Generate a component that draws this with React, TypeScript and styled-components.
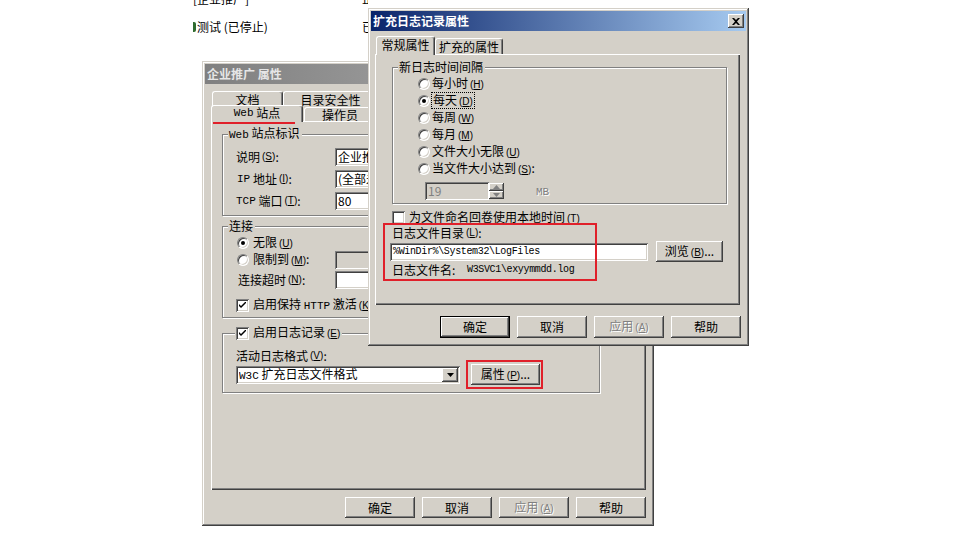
import React from "react";
import styled, { createGlobalStyle } from "styled-components";

const GlobalStyle = createGlobalStyle`
  html, body { margin: 0; padding: 0; background: #fff; }
  body { font-family: "Noto Sans CJK SC", "Liberation Sans", sans-serif; font-size: 12px; color: #000; }
  * { box-sizing: border-box; }
`;

const Desk = styled.div`
  position: relative;
  width: 954px;
  height: 551px;
  overflow: hidden;
  background: #fff;
`;

const Backdrop = styled.div`
  display: grid;
  grid-template-columns: 169px 6px;
  row-gap: 14px;
  padding-left: 193px;
  margin-top: -8px;
  font-size: 12px;
  line-height: 14px;
  white-space: nowrap;
`;

const ListCell = styled.div`
  display: flex;
  align-items: center;
  gap: 1px;
  overflow: hidden;
`;

const Sliver = styled.span`
  width: 3px;
  height: 10px;
  flex: none;
  background: #2f6b2f;
  border-radius: 0 2px 2px 0;
`;

const Window = styled.div<{ $x: number; $y: number; $w: number; $h: number; $z: number }>`
  position: absolute;
  left: ${(p) => p.$x}px;
  top: ${(p) => p.$y}px;
  width: ${(p) => p.$w}px;
  height: ${(p) => p.$h}px;
  z-index: ${(p) => p.$z};
  padding: 3px;
  background: #d4d0c8;
  box-shadow: inset -1px -1px #404040, inset 1px 1px #d4d0c8, inset -2px -2px #808080, inset 2px 2px #fff;
  display: flex;
  flex-direction: column;
`;

const TitleBar = styled.div<{ $active?: boolean }>`
  height: 20px;
  flex: none;
  display: flex;
  align-items: center;
  justify-content: space-between;
  padding: 0 2px 0 2px;
  background: ${(p) =>
    p.$active ? "linear-gradient(90deg, #0a246a, #a6caf0)" : "linear-gradient(90deg, #808080, #b8b8b8)"};
  color: ${(p) => (p.$active ? "#fff" : "#e6e6e6")};
  font-weight: 700;
  font-size: 12px;
  line-height: 14px;
  white-space: nowrap;
`;

const CloseBtn = styled.div`
  width: 16px;
  height: 14px;
  background: #d4d0c8;
  box-shadow: inset -1px -1px #404040, inset 1px 1px #fff, inset -2px -2px #808080;
  display: flex;
  align-items: center;
  justify-content: center;
`;

const Body = styled.div<{ $pt: number; $pl: number; $pr: number }>`
  padding: ${(p) => p.$pt}px ${(p) => p.$pr}px 0 ${(p) => p.$pl}px;
  display: flex;
  flex-direction: column;
`;

const TabStack = styled.div`
  display: flex;
  flex-direction: column;
`;

const TabRow = styled.div<{ $h: number; $pl?: number; $gap?: number }>`
  display: flex;
  align-items: flex-end;
  height: ${(p) => p.$h}px;
  padding-left: ${(p) => p.$pl ?? 0}px;
  gap: ${(p) => p.$gap ?? 0}px;
`;

const Tab = styled.div<{ $sel?: boolean; $w?: number; $h: number }>`
  position: relative;
  z-index: ${(p) => (p.$sel ? 2 : 1)};
  flex: ${(p) => (p.$w ? `0 0 ${p.$w}px` : "1 1 0")};
  height: ${(p) => (p.$sel ? p.$h + 3 : p.$h)}px;
  margin-bottom: ${(p) => (p.$sel ? -1 : 0)}px;
  background: #d4d0c8;
  border-top: 1px solid #fff;
  border-left: 1px solid #fff;
  border-right: 1px solid #404040;
  border-radius: 3px 3px 0 0;
  box-shadow: inset -1px 0 #808080;
  display: flex;
  align-items: center;
  justify-content: center;
  white-space: nowrap;
  overflow: hidden;
  font-size: 12px;
  line-height: 12px;
  padding-bottom: ${(p) => (p.$sel ? 2 : 0)}px;
`;

const Panel = styled.div<{ $w: number; $h: number; $pt: number; $pl: number }>`
  width: ${(p) => p.$w}px;
  height: ${(p) => p.$h}px;
  flex: none;
  padding: ${(p) => p.$pt}px 0 0 ${(p) => p.$pl}px;
  background: #d4d0c8;
  box-shadow: inset 1px 1px #fff, inset -1px -1px #404040, inset -2px -2px #808080;
  display: flex;
  flex-direction: column;
  align-items: flex-start;
`;

const Group = styled.fieldset<{ $w: number; $h: number; $mt?: number }>`
  margin: ${(p) => p.$mt ?? 0}px 0 0 0;
  padding: 0;
  width: ${(p) => p.$w}px;
  height: ${(p) => p.$h}px;
  flex: none;
  min-width: 0;
  border: 1px solid #808080;
  box-shadow: inset 1px 1px #fff, 1px 1px #fff;
`;

const Legend = styled.legend<{ $ml: number; $h?: number }>`
  margin-left: ${(p) => p.$ml}px;
  padding: 0 2px 0 1px;
  height: ${(p) => p.$h ?? 12}px;
  line-height: ${(p) => p.$h ?? 12}px;
  font-size: 12px;
  background: #d4d0c8;
  display: flex;
  align-items: center;
  gap: 4px;
  white-space: nowrap;
`;

const Stack = styled.div<{ $pt: number; $pl: number }>`
  display: flex;
  flex-direction: column;
  padding: ${(p) => p.$pt}px 0 0 ${(p) => p.$pl}px;
`;

const Row = styled.div<{ $h: number; $mt?: number; $ml?: number; $pl?: number; $gap?: number }>`
  display: flex;
  align-items: center;
  height: ${(p) => p.$h}px;
  margin-top: ${(p) => p.$mt ?? 0}px;
  margin-left: ${(p) => p.$ml ?? 0}px;
  padding-left: ${(p) => p.$pl ?? 0}px;
  gap: ${(p) => p.$gap ?? 0}px;
  white-space: nowrap;
  line-height: 14px;
  flex: none;
`;

const Label = styled.span<{ $w?: number; $pl?: number; $gap?: number }>`
  display: flex;
  align-items: center;
  gap: ${(p) => p.$gap ?? 0}px;
  width: ${(p) => (p.$w ? `${p.$w}px` : "auto")};
  padding-left: ${(p) => p.$pl ?? 0}px;
  flex: none;
`;

const Focus = styled.span`
  outline: 1px dotted #000;
  outline-offset: 0;
  padding: 0 1px;
  line-height: 13px;
`;

const AccWrap = styled.span`
  font-family: "Liberation Sans", sans-serif;
  font-size: 10px;
  margin-left: 2px;
`;

const Acc = ({ k }: { k: string }) => (
  <AccWrap>
    (<u>{k}</u>)
  </AccWrap>
);

const Lat = styled.span`
  font-family: "Liberation Mono", monospace;
  font-size: 11px;
`;

const Path = styled.span`
  font-family: "Liberation Mono", monospace;
  font-size: 10px;
  letter-spacing: -0.35px;
`;

const Field = styled.div<{ $w: number; $off?: boolean }>`
  width: ${(p) => p.$w}px;
  height: 18px;
  flex: none;
  background: ${(p) => (p.$off ? "#d4d0c8" : "#fff")};
  color: ${(p) => (p.$off ? "#808080" : "#000")};
  box-shadow: inset 1px 1px #808080, inset -1px -1px #fff, inset 2px 2px #404040, inset -2px -2px #d4d0c8;
  padding: 0 3px;
  display: flex;
  align-items: center;
  overflow: hidden;
  white-space: nowrap;
  line-height: 14px;
`;

const Spin = styled.div`
  display: flex;
  align-items: stretch;
  height: 18px;
`;

const SpinBtns = styled.div`
  width: 15px;
  display: flex;
  flex-direction: column;
  padding: 1px 0;
`;

const SpinBtn = styled.div`
  flex: 1;
  background: #d4d0c8;
  box-shadow: inset -1px -1px #404040, inset 1px 1px #fff, inset -2px -2px #808080;
  display: flex;
  align-items: center;
  justify-content: center;
`;

const Greyed = styled.span`
  color: #808080;
  text-shadow: 1px 1px #fff;
`;

const Select = styled.div<{ $w: number }>`
  width: ${(p) => p.$w}px;
  height: 18px;
  flex: none;
  background: #fff;
  box-shadow: inset 1px 1px #808080, inset -1px -1px #fff, inset 2px 2px #404040, inset -2px -2px #d4d0c8;
  padding: 2px 2px 2px 3px;
  display: flex;
  align-items: center;
  white-space: nowrap;
`;

const SelectText = styled.span`
  flex: 1;
  overflow: hidden;
  line-height: 14px;
`;

const DropBtn = styled.div`
  width: 16px;
  height: 14px;
  background: #d4d0c8;
  box-shadow: inset -1px -1px #404040, inset 1px 1px #fff, inset -2px -2px #808080;
  display: flex;
  align-items: center;
  justify-content: center;
`;

const RadioCircle = styled.span<{ $on?: boolean }>`
  width: 12px;
  height: 12px;
  flex: none;
  border-radius: 50%;
  background: #fff;
  border: 1px solid;
  border-color: #808080 #fff #fff #808080;
  box-shadow: inset 1px 1px #404040, inset -1px -1px #d4d0c8;
  display: flex;
  align-items: center;
  justify-content: center;
  &::after {
    content: "";
    width: 4px;
    height: 4px;
    border-radius: 50%;
    background: ${(p) => (p.$on ? "#000" : "transparent")};
  }
`;

const CheckBox = styled.span`
  width: 13px;
  height: 13px;
  flex: none;
  background: #fff;
  box-shadow: inset 1px 1px #808080, inset -1px -1px #fff, inset 2px 2px #404040, inset -2px -2px #d4d0c8;
  display: flex;
  align-items: center;
  justify-content: center;
`;

const Check = ({ on }: { on?: boolean }) => (
  <CheckBox>
    {on && (
      <svg width="7" height="7" viewBox="0 0 7 7">
        <path d="M0 2 L0 4 L2 6 L7 1 L7 -1 L2 4 Z" fill="#000" />
      </svg>
    )}
  </CheckBox>
);

const ButtonRow = styled.div<{ $mt: number }>`
  display: flex;
  justify-content: flex-end;
  gap: 7px;
  margin-top: ${(p) => p.$mt}px;
`;

const Btn = styled.button<{ $w?: number; $h?: number; $def?: boolean }>`
  width: ${(p) => p.$w ?? 70}px;
  height: ${(p) => p.$h ?? 21}px;
  flex: none;
  padding: 0;
  margin: 0;
  border: 0;
  font-family: inherit;
  font-size: 12px;
  line-height: 14px;
  background: #d4d0c8;
  color: #000;
  box-shadow: ${(p) =>
    p.$def
      ? "inset 0 0 0 1px #000, inset -2px -2px #404040, inset 2px 2px #fff, inset -3px -3px #808080"
      : "inset -1px -1px #404040, inset 1px 1px #fff, inset -2px -2px #808080"};
  white-space: nowrap;
  &:disabled {
    color: #808080;
    text-shadow: 1px 1px #fff;
  }
`;

const RedBox = styled.div<{ $x: number; $y: number; $w: number; $h: number }>`
  position: absolute;
  left: ${(p) => p.$x}px;
  top: ${(p) => p.$y}px;
  width: ${(p) => p.$w}px;
  height: ${(p) => p.$h}px;
  border: 2px solid #e0202a;
  z-index: 10;
  pointer-events: none;
`;

const RedLine = styled.div<{ $x: number; $y: number; $w: number }>`
  position: absolute;
  left: ${(p) => p.$x}px;
  top: ${(p) => p.$y}px;
  width: ${(p) => p.$w}px;
  height: 2px;
  background: #e0202a;
  z-index: 10;
`;

const Arrow = ({ up, color = "#000" }: { up?: boolean; color?: string }) => (
  <svg width="7" height="4" viewBox="0 0 7 4">
    <path d={up ? "M3.5 0 L7 4 L0 4 Z" : "M0 0 L7 0 L3.5 4 Z"} fill={color} />
  </svg>
);

const radios = [
  { t: "每小时", k: "H" },
  { t: "每天", k: "D" },
  { t: "每周", k: "W" },
  { t: "每月", k: "M" },
  { t: "文件大小无限", k: "U" },
  { t: "当文件大小达到", k: "S", colon: true },
];

export default function App() {
  return (
    <Desk>
      <GlobalStyle />
      <Backdrop>
        <ListCell>[企业推广]</ListCell>
        <ListCell>正在运行</ListCell>
        <ListCell>
          <Sliver />
          测试 (已停止)
        </ListCell>
        <ListCell>已停止</ListCell>
      </Backdrop>

      {/* Back dialog */}
      <Window $x={202} $y={61} $w={452} $h={465} $z={1}>
        <TitleBar>
          <span>企业推广 属性</span>
        </TitleBar>
        <Body $pt={7} $pl={6} $pr={5}>
          <TabStack>
            <TabRow $h={16} $pl={1}>
              <Tab $h={16} $w={71}>文档</Tab>
              <Tab $h={16} $w={95}>目录安全性</Tab>
              <Tab $h={16}>
                <Lat>HTTP</Lat> 头
              </Tab>
              <Tab $h={16}>自定义错误</Tab>
            </TabRow>
            <TabRow $h={14} $gap={1}>
              <Tab $h={14} $w={92} $sel>
                <Lat>Web</Lat>&nbsp;站点
              </Tab>
              <Tab $h={14} $w={72}>操作员</Tab>
              <Tab $h={14}>性能</Tab>
              <Tab $h={14}>
                <Lat>ISAPI</Lat> 筛选器
              </Tab>
              <Tab $h={14}>主目录</Tab>
            </TabRow>
          </TabStack>
          <Panel $w={435} $h={369} $pt={7} $pl={11}>
            <Group $w={378} $h={88}>
              <Legend $ml={5}>
                <span>
                  <Lat>Web</Lat> 站点标识
                </span>
              </Legend>
              <Stack $pt={8} $pl={13}>
                <Row $h={18}>
                  <Label $w={99}>
                    说明<Acc k="S" />:
                  </Label>
                  <Field $w={250}>企业推广</Field>
                </Row>
                <Row $h={18} $mt={4}>
                  <Label $w={99} $pl={1}>
                    <Lat>IP</Lat>&nbsp;地址<Acc k="I" />:
                  </Label>
                  <Field $w={250}>(全部未分配)</Field>
                </Row>
                <Row $h={18} $mt={4}>
                  <Label $w={99}>
                    <Lat>TCP</Lat>&nbsp;端口<Acc k="T" />:
                  </Label>
                  <Field $w={60}>80</Field>
                </Row>
              </Stack>
            </Group>

            <Group $w={378} $h={98} $mt={4}>
              <Legend $ml={5}>连接</Legend>
              <Stack $pt={3} $pl={14}>
                <Row $h={16} $gap={4}>
                  <RadioCircle $on />
                  <span>
                    无限<Acc k="U" />
                  </span>
                </Row>
                <Row $h={18}>
                  <Label $w={98} $gap={4}>
                    <RadioCircle />
                    <span>
                      限制到<Acc k="M" />:
                    </span>
                  </Label>
                  <Field $w={100} $off />
                </Row>
                <Row $h={18} $mt={2}>
                  <Label $w={98} $pl={1}>
                    连接超时<Acc k="N" />:
                  </Label>
                  <Field $w={100} />
                </Row>
                <Row $h={14} $mt={9} $ml={-1} $gap={4}>
                  <Check on />
                  <span>
                    启用保持 <Lat>HTTP</Lat> 激活<Acc k="K" />
                  </span>
                </Row>
              </Stack>
            </Group>

            <Group $w={378} $h={67} $mt={8}>
              <Legend $ml={12} $h={14}>
                <Check on />
                <span>
                  启用日志记录<Acc k="E" />
                </span>
              </Legend>
              <Stack $pt={9} $pl={13}>
                <Row $h={14}>
                  活动日志格式<Acc k="V" />:
                </Row>
                <Row $h={21} $mt={1} $gap={11}>
                  <Select $w={224}>
                    <SelectText>
                      <Lat>W3C</Lat> 扩充日志文件格式
                    </SelectText>
                    <DropBtn>
                      <Arrow />
                    </DropBtn>
                  </Select>
                  <Btn $w={69}>
                    属性<Acc k="P" />...
                  </Btn>
                </Row>
              </Stack>
            </Group>
          </Panel>
          <ButtonRow $mt={7}>
            <Btn>确定</Btn>
            <Btn>取消</Btn>
            <Btn disabled>
              应用<Acc k="A" />
            </Btn>
            <Btn>帮助</Btn>
          </ButtonRow>
        </Body>
      </Window>

      {/* Front dialog */}
      <Window $x={368} $y={8} $w={381} $h={338} $z={3}>
        <TitleBar $active>
          <span>扩充日志记录属性</span>
          <CloseBtn>
            <svg width="8" height="7" viewBox="0 0 8 7">
              <path
                d="M0 0 H2 L4 2 L6 0 H8 L5 3.5 L8 7 H6 L4 5 L2 7 H0 L3 3.5 Z"
                fill="#000"
              />
            </svg>
          </CloseBtn>
        </TitleBar>
        <Body $pt={5} $pl={4} $pr={5}>
          <TabRow $h={18} $pl={1}>
            <Tab $h={16} $w={59} $sel>
              常规属性
            </Tab>
            <Tab $h={16} $w={68}>
              扩充的属性
            </Tab>
          </TabRow>
          <Panel $w={365} $h={251} $pt={7} $pl={17}>
            <Group $w={335} $h={143}>
              <Legend $ml={5}>新日志时间间隔</Legend>
              <Stack $pt={2} $pl={25}>
                {radios.map((r, i) => (
                  <Row key={r.k} $h={17} $gap={2}>
                    <RadioCircle $on={i === 1} />
                    {i === 1 ? (
                      <Focus>
                        {r.t}
                        <Acc k={r.k} />
                      </Focus>
                    ) : (
                      <span>
                        {r.t}
                        <Acc k={r.k} />
                        {r.colon ? ":" : ""}
                      </span>
                    )}
                  </Row>
                ))}
                <Row $h={18} $mt={5} $pl={7} $gap={32}>
                  <Spin>
                    <Field $w={64} $off>
                      19
                    </Field>
                    <SpinBtns>
                      <SpinBtn>
                        <Arrow up color="#808080" />
                      </SpinBtn>
                      <SpinBtn>
                        <Arrow color="#808080" />
                      </SpinBtn>
                    </SpinBtns>
                  </Spin>
                  <Greyed>
                    <Lat>MB</Lat>
                  </Greyed>
                </Row>
              </Stack>
            </Group>
            <Row $h={13} $mt={7} $gap={4}>
              <Check />
              <span>
                为文件命名回卷使用本地时间<Acc k="T" />
              </span>
            </Row>
            <Row $h={14} $mt={2}>
              日志文件目录<Acc k="L" />:
            </Row>
            <Row $h={21} $mt={1} $ml={-2} $gap={8}>
              <Field $w={258}>
                <Path>%WinDir%\System32\LogFiles</Path>
              </Field>
              <Btn $w={67}>
                浏览<Acc k="B" />...
              </Btn>
            </Row>
            <Row $h={12} $mt={2}>
              <Label $w={75}>日志文件名:</Label>
              <Path>W3SVC1\exyymmdd.log</Path>
            </Row>
          </Panel>
          <ButtonRow $mt={11}>
            <Btn $def $h={22}>
              确定
            </Btn>
            <Btn $h={22}>取消</Btn>
            <Btn $h={22} disabled>
              应用<Acc k="A" />
            </Btn>
            <Btn $h={22}>帮助</Btn>
          </ButtonRow>
        </Body>
      </Window>

      <RedLine $x={213} $y={122} $w={82} />
      <RedBox $x={383} $y={223} $w={214} $h={58} />
      <RedBox $x={466} $y={360} $w={77} $h={29} />
    </Desk>
  );
}
